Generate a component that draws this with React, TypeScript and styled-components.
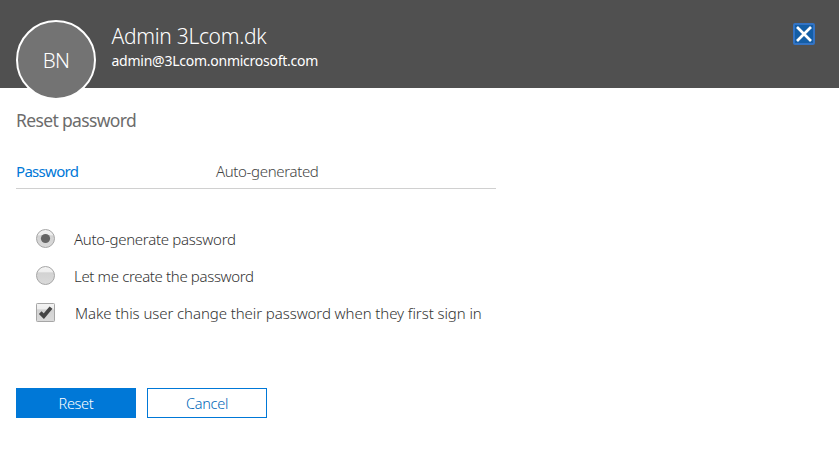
import React from "react";
import styled, { createGlobalStyle } from "styled-components";

const GlobalStyle = createGlobalStyle`
  * { box-sizing: border-box; }
  body {
    margin: 0;
    background: #fff;
    font-family: "Noto Sans", "Open Sans", sans-serif;
    font-weight: 300;
    color: #333;
  }
`;

const Panel = styled.div`
  width: 839px;
  height: 470px;
  overflow: hidden;
  background: #fff;
`;

const Header = styled.header`
  display: flex;
  align-items: flex-start;
  height: 88px;
  padding: 20px 24px 0 16px;
  background: #505050;
  color: #fff;
`;

const Avatar = styled.div`
  display: flex;
  align-items: center;
  justify-content: center;
  flex: none;
  width: 80px;
  height: 80px;
  border: 2px solid #fff;
  border-radius: 50%;
  background: #737373;
  font-size: 20.5px;
  letter-spacing: -0.7px;
`;

const Identity = styled.div`
  flex: 1;
  padding: 1px 0 0 15.5px;
  white-space: nowrap;
`;

const Line = styled.div<{ $size: number; $height: number; $track?: number; $weight?: number }>`
  font-size: ${(p) => p.$size}px;
  line-height: ${(p) => p.$height}px;
  letter-spacing: ${(p) => p.$track ?? 0}px;
  font-weight: ${(p) => p.$weight ?? 300};
`;

const CloseButton = styled.button`
  width: 22px;
  height: 22px;
  margin-top: 3px;
  padding: 0;
  border: 2px solid #3373c4;
  border-radius: 2px;
  background: #145ea6;
  svg { display: block; }
`;

const Title = styled.h1`
  margin: 19px 0 0 16px;
  height: 28px;
  font-size: 17.5px;
  line-height: 27px;
  font-weight: 400;
  letter-spacing: -0.65px;
  color: #6c6c6c;
`;

const Summary = styled.div`
  display: grid;
  grid-template-columns: 200px 280px;
  width: 480px;
  height: 34px;
  margin: 20px 0 0 16px;
  border-bottom: 1px solid #d0d0d0;
  font-size: 15px;
  line-height: 33px;
`;

const SummaryLabel = styled.span`
  color: #0078d7;
  font-weight: 400;
  letter-spacing: -0.7px;
`;

const SummaryValue = styled.span`
  color: #444;
  letter-spacing: -0.35px;
`;

const Options = styled.div`
  display: grid;
  grid-auto-rows: 37px;
  margin: 31px 0 0 36px;
`;

const Option = styled.label<{ $gap: number; $track: number }>`
  display: flex;
  align-items: center;
  gap: ${(p) => p.$gap}px;
  font-size: 15px;
  letter-spacing: ${(p) => p.$track}px;
  white-space: nowrap;
  svg { display: block; flex: none; }
`;

const Actions = styled.div`
  display: flex;
  gap: 11px;
  margin: 57px 0 0 16px;
`;

const Button = styled.button<{ $primary?: boolean }>`
  width: 120px;
  height: 30px;
  padding: 1px 0 0;
  border: 1px solid #0078d7;
  background: ${(p) => (p.$primary ? "#0078d7" : "#fff")};
  color: ${(p) => (p.$primary ? "#fff" : "#0067b8")};
  font: 300 14.5px/27px "Noto Sans", sans-serif;
  letter-spacing: -0.3px;
`;

const Radio = ({ checked = false }: { checked?: boolean }) => (
  <svg width="20" height="20" viewBox="0 0 20 20">
    <defs>
      <linearGradient id="gloss" x1="0" y1="0" x2="0" y2="1">
        <stop offset="0" stopColor="#f4f4f4" />
        <stop offset="0.32" stopColor="#ededed" />
        <stop offset="0.34" stopColor="#d2d2d2" />
        <stop offset="1" stopColor="#dadada" />
      </linearGradient>
    </defs>
    <circle cx="9.5" cy="9.5" r="9" fill="url(#gloss)" stroke="#a6a6a6" />
    {checked && <circle cx="9.5" cy="9.5" r="4.6" fill="#666" />}
  </svg>
);

const Checkbox = () => (
  <svg width="20" height="20" viewBox="0 0 20 20">
    <rect x="0.5" y="0.5" width="18" height="18" rx="0.8" fill="url(#gloss)" stroke="#a6a6a6" />
    <path d="M4.2 9.6 L7.8 13.2 L15 4.6" fill="none" stroke="#454545" strokeWidth="3.8" />
  </svg>
);

export default function App() {
  return (
    <Panel>
      <GlobalStyle />
      <Header>
        <Avatar>BN</Avatar>
        <Identity>
          <Line $size={21} $height={30} $track={-0.3}>Admin 3Lcom.dk</Line>
          <Line $size={14} $height={20} $weight={400} $track={-0.25}>admin@3Lcom.onmicrosoft.com</Line>
        </Identity>
        <CloseButton aria-label="Close">
          <svg width="18" height="18" viewBox="0 0 18 18">
            <path d="M2 2 L16 16 M16 2 L2 16" stroke="#fff" strokeWidth="2.7" />
          </svg>
        </CloseButton>
      </Header>
      <Title>Reset password</Title>
      <Summary>
        <SummaryLabel>Password</SummaryLabel>
        <SummaryValue>Auto-generated</SummaryValue>
      </Summary>
      <Options>
        <Option $gap={18} $track={-0.28}><Radio checked />Auto-generate password</Option>
        <Option $gap={18} $track={-0.35}><Radio />Let me create the password</Option>
        <Option $gap={19} $track={-0.08}><Checkbox />Make this user change their password when they first sign in</Option>
      </Options>
      <Actions>
        <Button $primary>Reset</Button>
        <Button>Cancel</Button>
      </Actions>
    </Panel>
  );
}
